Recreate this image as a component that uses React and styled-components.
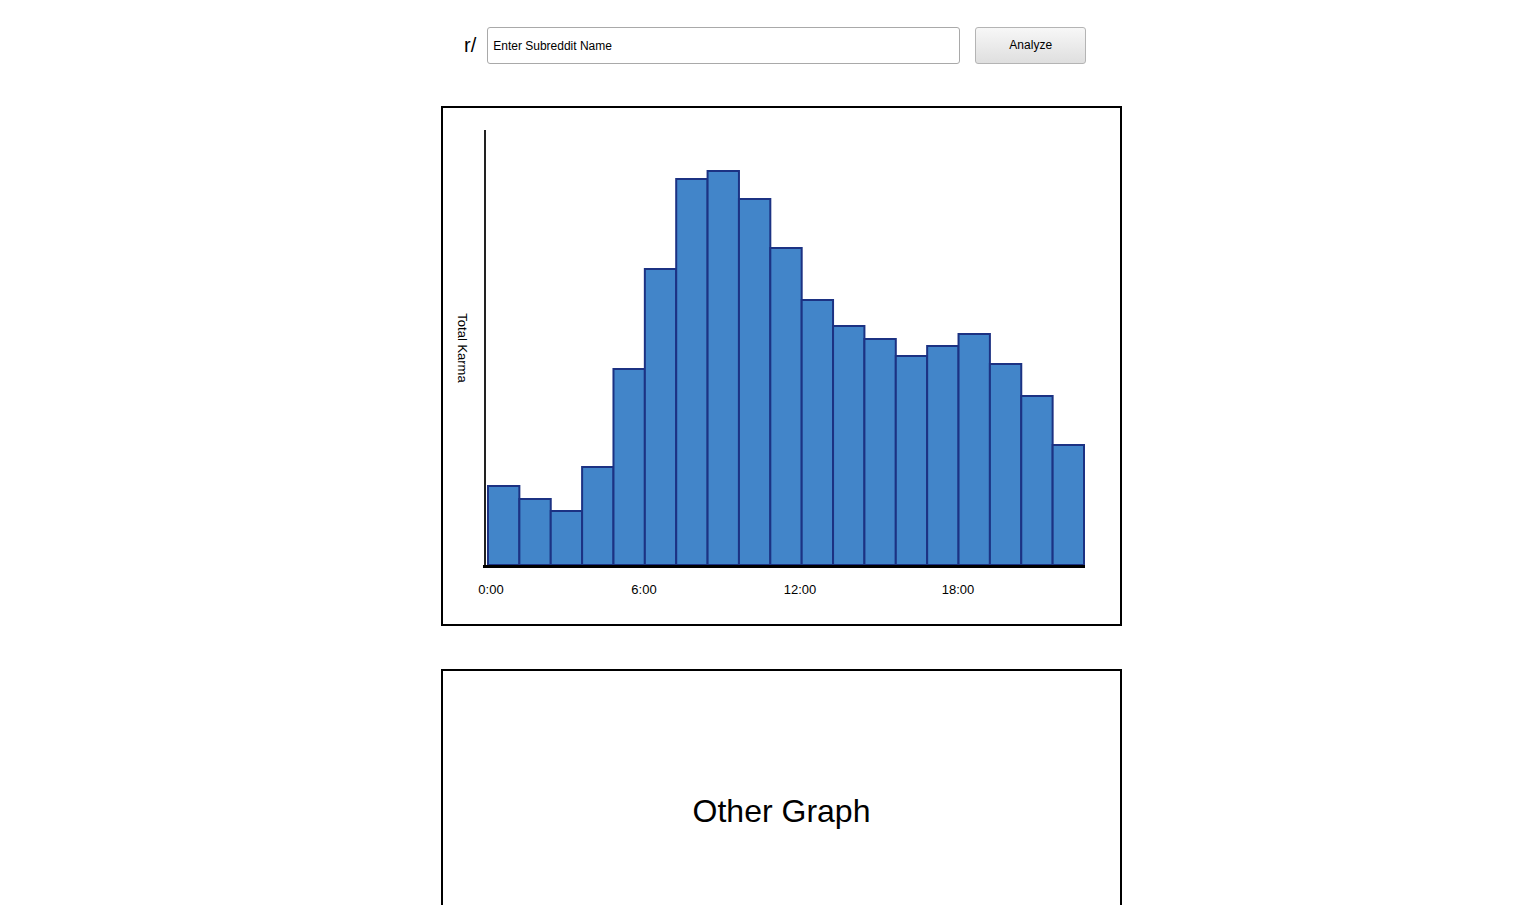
import React from "react"
import styled, { createGlobalStyle } from "styled-components"

const GlobalStyle = createGlobalStyle`
body {
  margin:0;
  background:#fff;
  font-family:"Liberation Sans", Arial, sans-serif;
  color:#000;
}
`

const Page = styled.div`
width:681px;
margin-left:441px;
padding-top:27px;
`

const SearchBar = styled.div`
display:flex;
align-items:center;
padding-left:23px;
`

const Prefix = styled.span`
font-size:20px;
margin-right:11px;
`

const SubInput = styled.input`
width:473px;
height:37px;
box-sizing:border-box;
border:1px solid #a9a9a9;
border-radius:3px;
padding:0 5px;
font-family:"Liberation Sans", Arial, sans-serif;
font-size:12px;
color:#000;
&::placeholder { color:#000; }
`

const AnalyzeButton = styled.button`
width:111px;
height:37px;
margin-left:15px;
padding:0 0 2px;
border:1px solid #b4b4b4;
border-radius:3px;
background:linear-gradient(#f7f7f7, #dfdfdf);
font-family:"Liberation Sans", Arial, sans-serif;
font-size:12px;
color:#000;
`

const GraphBox = styled.div`
box-sizing:border-box;
width:681px;
height:520px;
border:2px solid #000;
margin-top:${p => p.$top}px;
`

const Placeholder = styled(GraphBox)`
display:flex;
justify-content:center;
padding-top:122px;
font-size:32px;
`

const karma = [486, 499, 511, 467, 369, 269, 179, 171, 199, 248, 300, 326, 339, 356, 346, 334, 364, 396, 445]

const KarmaChart = () => {
  const base = 457
  const left = 45
  const step = (641 - left) / karma.length
  return (
    <svg width="677" height="516" style={{ display: "block" }}>
      {karma.map((top, i) => (
        <rect
          key={i}
          x={left + i * step}
          y={top - 108}
          width={step}
          height={base - (top - 108)}
          fill="#4285c9"
          stroke="#1c3283"
          strokeWidth="2"
        />
      ))}
      <line x1="42" y1="22" x2="42" y2="459" stroke="#222" strokeWidth="2" />
      <line x1="40" y1="458.5" x2="642" y2="458.5" stroke="#000" strokeWidth="3" />
      <g fontFamily="Liberation Sans, Arial, sans-serif" fontSize="13" textAnchor="middle">
        <text x="48" y="486">0:00</text>
        <text x="201" y="486">6:00</text>
        <text x="357" y="486">12:00</text>
        <text x="515" y="486">18:00</text>
        <text transform="translate(15 240) rotate(90)">Total Karma</text>
      </g>
    </svg>
  )
}

const App = () => {
  return (
    <Page>
      <GlobalStyle />
      <SearchBar>
        <Prefix>r/</Prefix>
        <SubInput placeholder="Enter Subreddit Name" />
        <AnalyzeButton>Analyze</AnalyzeButton>
      </SearchBar>
      <GraphBox $top={42}>
        <KarmaChart />
      </GraphBox>
      <Placeholder $top={43}>Other Graph</Placeholder>
    </Page>
  )
}

export default App
